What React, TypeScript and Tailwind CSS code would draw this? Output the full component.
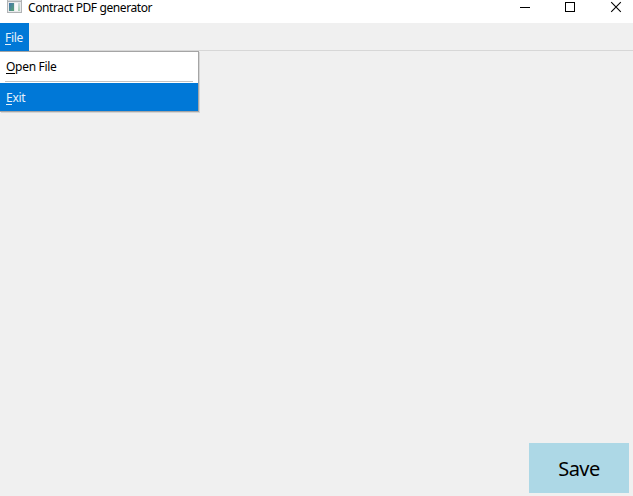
import React from 'react';

function WindowIcon() {
  return (
    <svg width="16" height="14" viewBox="0 0 16 14" shapeRendering="crispEdges" className="block">
      <defs>
        <linearGradient id="pane" x1="0" y1="0" x2="1" y2="1">
          <stop offset="0" stopColor="#4474ad" />
          <stop offset="1" stopColor="#57a273" />
        </linearGradient>
        <linearGradient id="side" x1="0" y1="0" x2="0" y2="1">
          <stop offset="0" stopColor="#d3dbe0" />
          <stop offset="1" stopColor="#a9d0b4" />
        </linearGradient>
      </defs>
      <rect x="0" y="0" width="15" height="13" fill="#b0b3b5" />
      <rect x="1" y="0" width="13" height="1" fill="#d5d8d9" />
      <rect x="1" y="2" width="13" height="10" fill="#e8eaeb" />
      <rect x="2" y="3" width="5" height="8" fill="url(#pane)" />
      <rect x="8" y="3" width="3" height="8" fill="#f8f8f8" />
      <rect x="11" y="3" width="2" height="8" fill="url(#side)" />
    </svg>
  );
}

function TitleBar() {
  return (
    <header className="flex h-[23px] items-start bg-white pl-[7px]">
      <WindowIcon />
      <span className="ml-[5px] w-[124px] whitespace-nowrap text-[12px] leading-4 tracking-[-0.4px] text-black">
        Contract PDF generator
      </span>
      <div className="ml-auto flex">
        <svg width="113" height="14" viewBox="520 0 113 14" fill="none" stroke="#000">
          <path d="M520 7.5h10" shapeRendering="crispEdges" />
          <rect x="565.5" y="2.5" width="9" height="9" shapeRendering="crispEdges" />
          <path d="M611.2 2.2l9.6 9.6M620.8 2.2l-9.6 9.6" strokeWidth="1.1" />
        </svg>
      </div>
    </header>
  );
}

function Label({ text }: { text: string }) {
  return (
    <span className="whitespace-nowrap">
      <span className="inline-block h-[13px] leading-[13px] shadow-[0_1px_0_0_currentColor]">{text[0]}</span>
      {text.slice(1)}
    </span>
  );
}

function FileMenu() {
  return (
    <div className="absolute left-0 top-[28px] flex h-[61px] w-[199px] flex-col border-y border-r border-[#a5a5a5] bg-white shadow-[1px_1px_0_0_#d5d5d5]">
      <div className="flex h-[29px] items-center pl-[6px] pt-px text-black">
        <Label text="Open File" />
      </div>
      <div className="ml-[5px] h-px w-[188px] bg-[#c3c3c3]" />
      <div className="mt-px flex h-[28px] items-center bg-[#0078d7] pl-[6px] pt-[2px] text-[#e5f1fb]">
        <Label text="Exit" />
      </div>
    </div>
  );
}

export default function App() {
  return (
    <div className="flex h-[496px] w-[633px] flex-col overflow-hidden bg-[#f0f0f0] font-['Noto_Sans','Open_Sans',sans-serif]">
      <TitleBar />
      <nav className="relative flex h-[28px] border-b border-[#d7d7d7] text-[12px] leading-4 tracking-[-0.3px]">
        <div className="flex h-[28px] w-[29px] items-center bg-[#0078d7] pl-[5px] pt-[2px] text-[#e5f1fb]">
          <Label text="File" />
        </div>
        <FileMenu />
      </nav>
      <main className="flex flex-1 items-end justify-end pb-[3px] pr-1">
        <button className="h-[50px] w-[100px] bg-[#add8e6] pt-px text-[20px] leading-[49px] tracking-[-0.5px] text-black">
          Save
        </button>
      </main>
    </div>
  );
}
